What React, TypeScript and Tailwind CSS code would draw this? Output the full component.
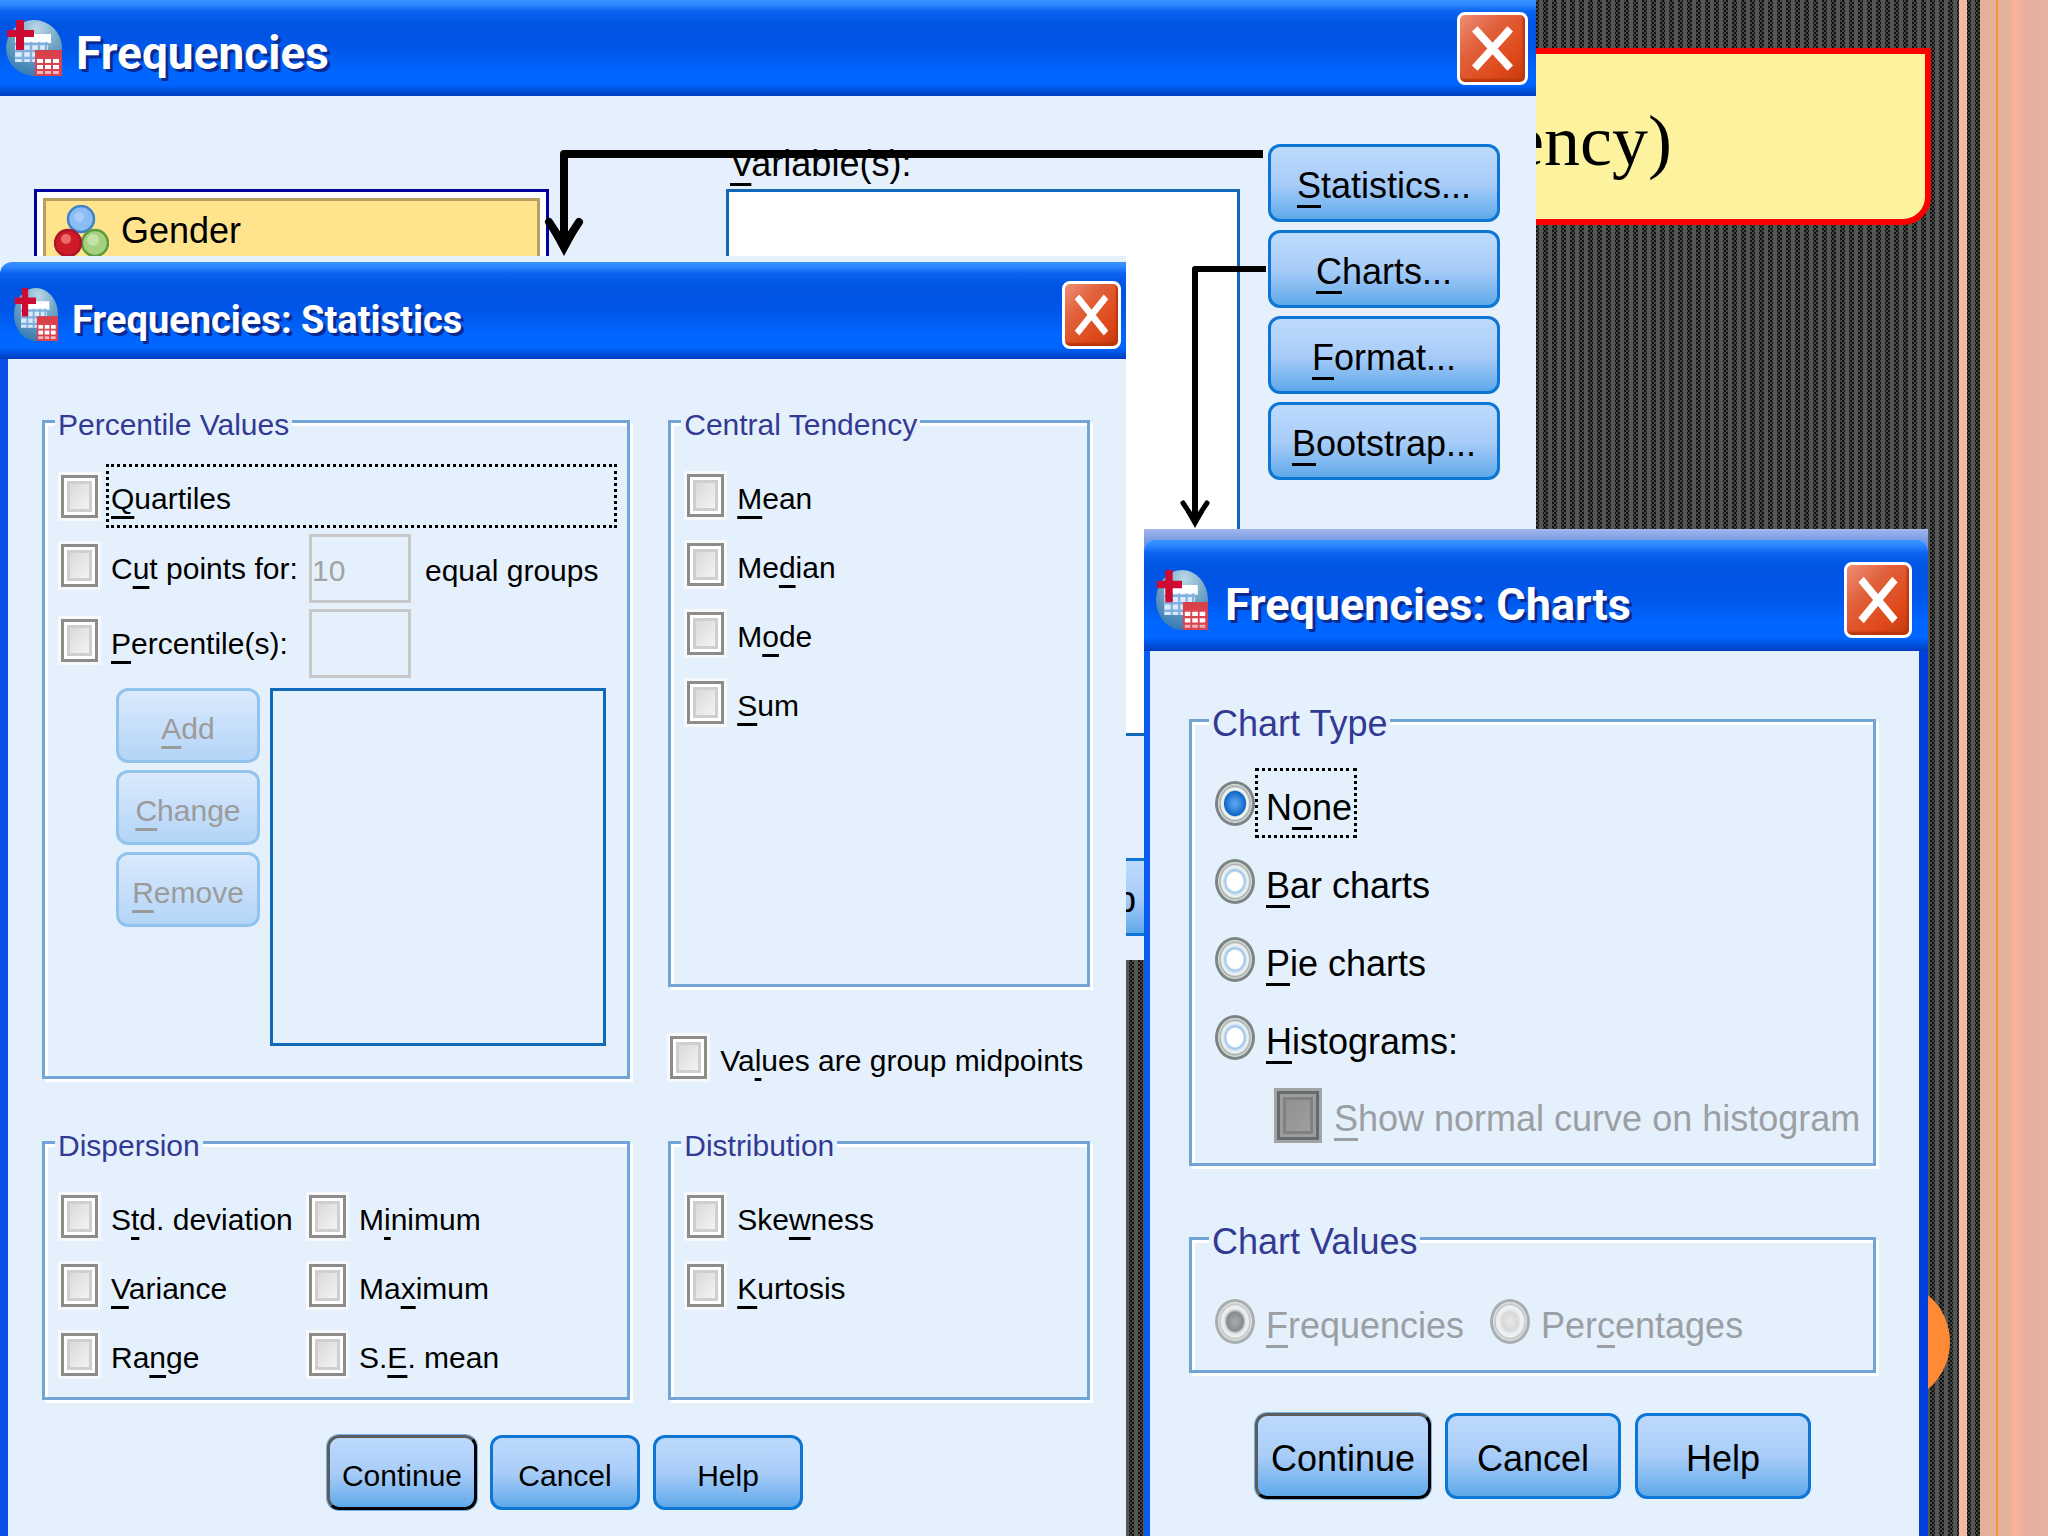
import type { ReactNode } from "react";
import clsx from "clsx";

// wraps the mnemonic letter, marked with "_" in front: "_Mean" / "Me_dian"
function Mnemonic({ text }: { text: string }) {
  const i = text.indexOf("_");
  if (i < 0) return <>{text}</>;
  return (
    <>
      {text.slice(0, i)}
      <span className="underline decoration-[3px] underline-offset-[7px] [text-decoration-skip-ink:none]">{text[i + 1]}</span>
      {text.slice(i + 2)}
    </>
  );
}

function AppIcon({ className }: { className?: string }) {
  return (
    <svg viewBox="0 0 56 56" preserveAspectRatio="none" className={className} aria-hidden="true">
      <defs>
        <radialGradient id="globe" cx="0.55" cy="0.15" r="0.9">
          <stop offset="0" stopColor="#b9d8e6" />
          <stop offset="0.5" stopColor="#6fa3c4" />
          <stop offset="1" stopColor="#2f76b4" />
        </radialGradient>
      </defs>
      <circle cx="28" cy="28" r="28" fill="url(#globe)" />
      <rect x="9" y="14" width="36" height="9" fill="#fff" />
      <rect x="9" y="22" width="33" height="20" fill="#dcebfa" />
      <path d="M9 24H42M9 31H42M9 38H42M17 22V42M25 22V42M33 22V42M40 22V42" stroke="#7fb0e0" strokeWidth="2.4" />
      <rect x="29" y="30" width="27" height="26" fill="#dc4350" />
      <rect x="30" y="30" width="26" height="6" fill="#d8404a" />
      <path d="M31 39h6v4h-6zM39 39h6v4h-6zM47 39h6v4h-6zM31 45h6v4h-6zM39 45h6v4h-6zM47 45h6v4h-6z" fill="#fff" />
      <path d="M31 51h6v3h-6zM39 51h6v3h-6zM47 51h6v3h-6z" fill="#f3b6bd" />
      <path d="M10 0h8v10h10v7H18v13h-8V17H1v-7h9z" fill="#cc0a33" />
    </svg>
  );
}

function CloseButton({ className }: { className: string }) {
  return (
    <button
      type="button"
      aria-label="Close"
      className={clsx(
        "shrink-0 rounded-lg border-[3px] border-white bg-[linear-gradient(135deg,#ee8f76_0%,#e0603a_35%,#e04a1c_70%,#c23a10_100%)] shadow-[inset_-2px_-3px_2px_#b9360c]",
        className,
      )}
    >
      <svg viewBox="0 0 60 60" preserveAspectRatio="none" className="h-full w-full" aria-hidden="true">
        <path d="M16 15L44 45M44 15L16 45" stroke="#fff" strokeWidth="7" strokeLinecap="square" />
      </svg>
    </button>
  );
}

interface TitleBarProps {
  title: string;
  className: string;
  iconClass: string;
  closeClass: string;
}

function TitleBar({ title, className, iconClass, closeClass }: TitleBarProps) {
  return (
    <header
      className={clsx(
        "flex items-center bg-[linear-gradient(180deg,#3a93ff_0%,#2b86ff_5%,#0a63f0_12%,#0054e3_25%,#0056e8_50%,#0066ff_75%,#0066ff_88%,#0048cf_97%,#003cc0_100%)]",
        className,
      )}
    >
      <AppIcon className={iconClass} />
      <h2 className="flex-1 pt-2.5 font-[Roboto,sans-serif] font-bold whitespace-nowrap text-white [text-shadow:3px_3px_0_#0b2a90]">{title}</h2>
      <CloseButton className={closeClass} />
    </header>
  );
}

interface XpButtonProps {
  label: string;
  className: string;
  focused?: boolean;
  disabled?: boolean;
}

function XpButton({ label, className, focused, disabled }: XpButtonProps) {
  return (
    <button
      type="button"
      disabled={disabled}
      className={clsx(
        "rounded-xl border-[3px] pt-1.5 whitespace-nowrap",
        disabled && "border-[#92c3ec] bg-linear-to-b from-[#dbe9fd] to-[#b3d5f7] text-[#9b9b9b]",
        !disabled && "bg-linear-to-b from-[#bddafd] via-[#a9cdf8] to-[#5ea9ea] text-black",
        !disabled && !focused && "border-[#0d76d4]",
        focused && "border-t-[#5c5c5c] border-r-black border-b-black border-l-[#5c5c5c] shadow-[0_0_0_1px_#6fb3ec]",
        className,
      )}
    >
      <Mnemonic text={label} />
    </button>
  );
}

const boxClass =
  "h-[43px] w-[37px] shrink-0 appearance-none border-[3px] border-[#8d8c88] bg-linear-to-br from-[#d2d2d2] to-[#fbfbfb] shadow-[0_0_0_3px_#f6f8fb,inset_0_0_0_3px_#ffffff,inset_0_0_0_6px_#cfcfcf]";

function Check({ label }: { label: string }) {
  return (
    <label className="flex items-center gap-[13px] whitespace-nowrap">
      <input type="checkbox" className={boxClass} />
      <span className="pt-1.5">
        <Mnemonic text={label} />
      </span>
    </label>
  );
}

interface RadioProps {
  name: string;
  label: string;
  checked?: boolean;
  focused?: boolean;
  disabled?: boolean;
}

function Radio({ name, label, checked, focused, disabled }: RadioProps) {
  return (
    <label className={clsx("flex h-[70px] items-center whitespace-nowrap", disabled && "text-[#9b9fa3]")}>
      <input
        type="radio"
        name={name}
        defaultChecked={checked}
        disabled={disabled}
        className={clsx(
          "h-[45px] w-10 shrink-0 appearance-none rounded-[50%] border-[3px]",
          !disabled && "border-[#7d8484]",
          disabled && "border-[#a9aeb0]",
          checked && !disabled && "bg-[radial-gradient(closest-side,#62a8f0_0%,#3d8de2_30%,#0f66c4_62%,#dfe8e4_68%,#f4f8f6_78%,#a4acaa_88%,#e6ebe9_100%)]",
          !checked && !disabled && "bg-[radial-gradient(closest-side,#ffffff_0%,#ffffff_46%,#9cc4ec_56%,#d7e6ee_68%,#f2f6f4_78%,#a9b0ae_88%,#e6ebe9_100%)]",
          checked && disabled && "bg-[radial-gradient(closest-side,#a9adb0_0%,#868b8e_48%,#dfe3e4_62%,#eff1f2_78%,#c2c6c8_88%,#e6ebe9_100%)]",
          !checked && disabled && "bg-[radial-gradient(closest-side,#e8e8e8_0%,#d6d8da_48%,#e9ecee_62%,#f1f3f4_78%,#c2c6c8_88%,#e6ebe9_100%)]",
        )}
      />
      <span
        className={clsx(
          "flex h-full items-center border-[3px] pt-2.5 pr-0.5 pl-2",
          focused ? "border-dotted border-black" : "border-transparent",
        )}
      >
        <span>
          <Mnemonic text={label} />
        </span>
      </span>
    </label>
  );
}

function Group({ title, className, children }: { title: string; className?: string; children: ReactNode }) {
  return (
    <fieldset className={clsx("min-w-0 border-[3px] border-[#72a4d6] shadow-[3px_3px_0_#fff,inset_3px_3px_0_#fff]", className)}>
      <legend className="-ml-1.5 bg-[#e5f0fd] px-[3px] pt-2 whitespace-nowrap text-[#333a94]">{title}</legend>
      {children}
    </fieldset>
  );
}

function NominalIcon() {
  return (
    <svg viewBox="0 0 55 52" className="h-[52px] w-[55px]" aria-hidden="true">
      <circle cx="27" cy="14" r="13" fill="#8cbcf4" stroke="#3f82cc" strokeWidth="2.5" />
      <circle cx="25" cy="12" r="5" fill="#a6cdfa" />
      <circle cx="41" cy="38" r="13" fill="#a5d07f" stroke="#5c9a3a" strokeWidth="2.5" />
      <circle cx="39" cy="35" r="6" fill="#c4e3a6" />
      <circle cx="14" cy="38" r="13" fill="#cf1b25" stroke="#a9152c" strokeWidth="2.5" />
      <circle cx="12" cy="34" r="5" fill="#ec6a6a" />
    </svg>
  );
}

function MainDialog() {
  return (
    <section className="absolute top-0 left-0 h-[960px] w-3/4 bg-[#e5f0fc] text-[36px] leading-10">
      <TitleBar title="Frequencies" className="h-24 pr-2 pl-1.5 text-[46px]" iconClass="mr-3.5 h-14 w-14" closeClass="h-[73px] w-[71px]" />
      <div className="flex items-start pt-12 pr-9 pl-[34px]">
        <div className="mt-[45px] h-[547px] w-[515px] border-[3px] border-[#0000a0] bg-white p-1.5">
          <div className="flex items-center gap-3 border-[3px] border-[#b3a062] bg-[#ffe48d] px-2 py-1">
            <NominalIcon />
            <span>Gender</span>
          </div>
        </div>
        <div className="ml-auto w-[514px]">
          <div className="h-[45px] pl-1">
            <Mnemonic text="_Variable(s):" />
          </div>
          <div className="h-[547px] border-[3px] border-[#1168b6] bg-white" />
        </div>
        <div className="ml-7 flex flex-col gap-2">
          <XpButton label="_Statistics..." className="h-[78px] w-[232px]" />
          <XpButton label="_Charts..." className="h-[78px] w-[232px]" />
          <XpButton label="_Format..." className="h-[78px] w-[232px]" />
          <XpButton label="_Bootstrap..." className="h-[78px] w-[232px]" />
        </div>
      </div>
      <div className="mt-[122px] flex justify-end pr-[362px]">
        <XpButton label="Help" className="h-[78px] w-[150px]" />
      </div>
    </section>
  );
}

function StatisticsDialog() {
  return (
    <section className="absolute top-64 bottom-0 left-0 flex w-[55%] flex-col bg-[#e5f0fd] pt-1.5 text-[30px] leading-9">
      <TitleBar
        title="Frequencies: Statistics"
        className="h-[97px] rounded-tl-xl pt-2 pr-[5px] pl-3.5 text-[38px]"
        iconClass="mr-3.5 h-[53px] w-11"
        closeClass="h-[68px] w-[59px]"
      />
      <div className="flex-1 border-l-8 border-[#0a50e8] pt-10 pr-9 pl-[34px]">
        <div className="grid grid-cols-[minmax(0,588fr)_minmax(0,422fr)] gap-x-[38px] gap-y-[41px]">
          <Group title="Percentile Values" className="h-[680px] pr-2.5 pl-4">
            <label className="mt-[21px] flex h-16 items-center gap-2">
              <input type="checkbox" className={boxClass} />
              <span className="flex h-full flex-1 items-center border-[3px] border-dotted border-black pt-1.5 pl-0.5">
                <span>
                  <Mnemonic text="_Quartiles" />
                </span>
              </span>
            </label>
            <div className="mt-1.5 flex items-center">
              <div className="mb-1.5 w-[248px]">
                <Check label="C_ut points for:" />
              </div>
              <input
                type="text"
                disabled
                defaultValue="10"
                aria-label="Number of groups"
                className="h-[69px] w-[102px] border-[3px] border-[#c8c8c8] bg-transparent pt-1 text-[#a3a3a3]"
              />
              <span className="ml-3.5 pt-1 whitespace-nowrap">equal groups</span>
            </div>
            <div className="mt-1.5 flex items-center">
              <div className="mb-1.5 w-[248px]">
                <Check label="_Percentile(s):" />
              </div>
              <input type="text" disabled aria-label="Percentile" className="h-[69px] w-[102px] border-[3px] border-[#c8c8c8] bg-transparent" />
            </div>
            <div className="mt-2.5 flex gap-2.5 pl-[55px]">
              <div className="flex flex-col gap-[7px]">
                <XpButton label="_Add" disabled className="h-[75px] w-36" />
                <XpButton label="_Change" disabled className="h-[75px] w-36" />
                <XpButton label="_Remove" disabled className="h-[75px] w-36" />
              </div>
              <div className="h-[358px] w-[336px] border-[3px] border-[#1168b6]" />
            </div>
          </Group>

          <div className="flex flex-col justify-between">
            <Group title="Central Tendency" className="h-[588px] pl-4">
              <div className="flex flex-col gap-[26px] pt-[31px]">
                <Check label="_Mean" />
                <Check label="Me_dian" />
                <Check label="M_ode" />
                <Check label="_Sum" />
              </div>
            </Group>
            <div className="pl-0.5">
              <Check label="Va_lues are group midpoints" />
            </div>
          </div>

          <Group title="Dispersion" className="h-[280px] pl-4">
            <div className="grid grid-cols-[248px_1fr] gap-y-[26px] pt-[31px]">
              <Check label="S_td. deviation" />
              <Check label="M_inimum" />
              <Check label="_Variance" />
              <Check label="Ma_ximum" />
              <Check label="Ra_nge" />
              <Check label="S._E. mean" />
            </div>
          </Group>

          <Group title="Distribution" className="h-[280px] pl-4">
            <div className="flex flex-col gap-[26px] pt-[31px]">
              <Check label="Ske_wness" />
              <Check label="_Kurtosis" />
            </div>
          </Group>
        </div>
        <div className="mt-[35px] flex gap-[13px] pl-[285px]">
          <XpButton label="Continue" focused className="h-[75px] w-[150px]" />
          <XpButton label="Cancel" className="h-[75px] w-[150px]" />
          <XpButton label="Help" className="h-[75px] w-[150px]" />
        </div>
      </div>
    </section>
  );
}

function ChartsDialog() {
  return (
    <section className="absolute top-[529px] bottom-0 left-[1144px] flex w-[784px] flex-col bg-[linear-gradient(180deg,#a3b5ea,#6f97e6_14px)] pt-[11px] text-[36px] leading-10">
      <TitleBar
        title="Frequencies: Charts"
        className="h-[111px] rounded-t-xl pt-2 pr-4 pl-3 text-[45px]"
        iconClass="mr-[17px] h-[60px] w-[52px]"
        closeClass="h-[76px] w-[68px]"
      />
      <div className="flex-1 border-r-[9px] border-l-[6px] border-r-[#0040e0] border-l-[#0a5cf0] bg-[#e5f0fd] pt-[45px] pr-[43px] pl-[39px]">
        <Group title="Chart Type" className="h-[470px] pl-[23px]">
          <div className="flex flex-col gap-2 pt-6">
            <Radio name="chart-type" label="N_one" checked focused />
            <Radio name="chart-type" label="_Bar charts" />
            <Radio name="chart-type" label="_Pie charts" />
            <Radio name="chart-type" label="_Histograms:" />
          </div>
          <label className="mt-4 flex items-center gap-3 pl-[59px] whitespace-nowrap text-[#9b9fa3]">
            <input
              type="checkbox"
              disabled
              className="h-[55px] w-12 shrink-0 appearance-none border-[3px] border-[#a2a4a4] bg-linear-to-br from-[#8a8d8c] to-[#a3a5a4] shadow-[inset_0_0_0_3px_#666a6a,inset_0_0_0_6px_#9b9d9c,inset_0_0_0_9px_#7f8281]"
            />
            <span className="pt-1.5">
              <Mnemonic text="_Show normal curve on histogram" />
            </span>
          </label>
        </Group>
        <Group title="Chart Values" className="mt-12 h-[159px] pl-[23px]">
          <div className="flex pt-6">
            <div className="w-[275px]">
              <Radio name="chart-values" label="_Frequencies" checked disabled />
            </div>
            <Radio name="chart-values" label="Per_centages" disabled />
          </div>
        </Group>
        <div className="mt-10 flex gap-3.5 pl-[66px]">
          <XpButton label="Continue" focused className="h-[86px] w-44" />
          <XpButton label="Cancel" className="h-[86px] w-44" />
          <XpButton label="Help" className="h-[86px] w-44" />
        </div>
      </div>
    </section>
  );
}

function Slide() {
  return (
    <div className="flex h-full bg-[repeating-linear-gradient(90deg,#545654_0_4px,transparent_4px_9px),repeating-conic-gradient(#121212_0_25%,#444644_0_50%)] [background-size:auto,4px_4px]">
      <div className="relative flex-1">
        {/* callout behind the dialogs, only its right end shows */}
        <div className="absolute top-12 right-7 flex h-[177px] w-[440px] items-center rounded-br-[28px] border-[6px] border-[#fb0000] bg-[#fdf39f] pt-2 pl-[15px]">
          <span className="font-['Liberation_Serif',serif] text-[72px] text-black">ency)</span>
        </div>
        <div className="absolute top-[1281px] right-[9px] h-[122px] w-[122px] rounded-full bg-[#ff8a35]" />
      </div>
      <div className="w-2 bg-[#f4b8a4]" />
      <div className="w-[13px]" />
      <div className="w-4 bg-[#e4b29b]" />
      <div className="w-0.5 bg-[#fb8f3c]" />
      <div className="w-[50px] bg-[linear-gradient(90deg,#e2b29b_0%,#e5b19d_25%,#ffb299_32%,#f2b09e_42%,#e6b0a0_60%,#e8b2a4_100%)]" />
    </div>
  );
}

function Arrows() {
  return (
    <svg className="pointer-events-none absolute top-0 left-0 h-[560px] w-[1300px]" viewBox="0 0 1300 560" fill="none" stroke="#000" aria-hidden="true">
      <path d="M1263 154H564V240" strokeWidth="8" strokeLinejoin="round" />
      <path d="M549 222L564 245L579 222" strokeWidth="8" strokeLinecap="round" />
      <path d="M551 232L577 232L564 256Z" fill="#000" stroke="none" />
      <path d="M1266 269H1195V515" strokeWidth="6" strokeLinejoin="round" />
      <path d="M1183 503L1195 521L1207 503" strokeWidth="5" strokeLinecap="round" />
      <path d="M1186 512H1204L1195 528Z" fill="#000" stroke="none" />
    </svg>
  );
}

export default function App() {
  return (
    <main className="relative h-screen w-full overflow-hidden bg-[#333] font-['Liberation_Sans',Arial,sans-serif] text-black">
      <Slide />
      <MainDialog />
      <StatisticsDialog />
      <ChartsDialog />
      <Arrows />
    </main>
  );
}
